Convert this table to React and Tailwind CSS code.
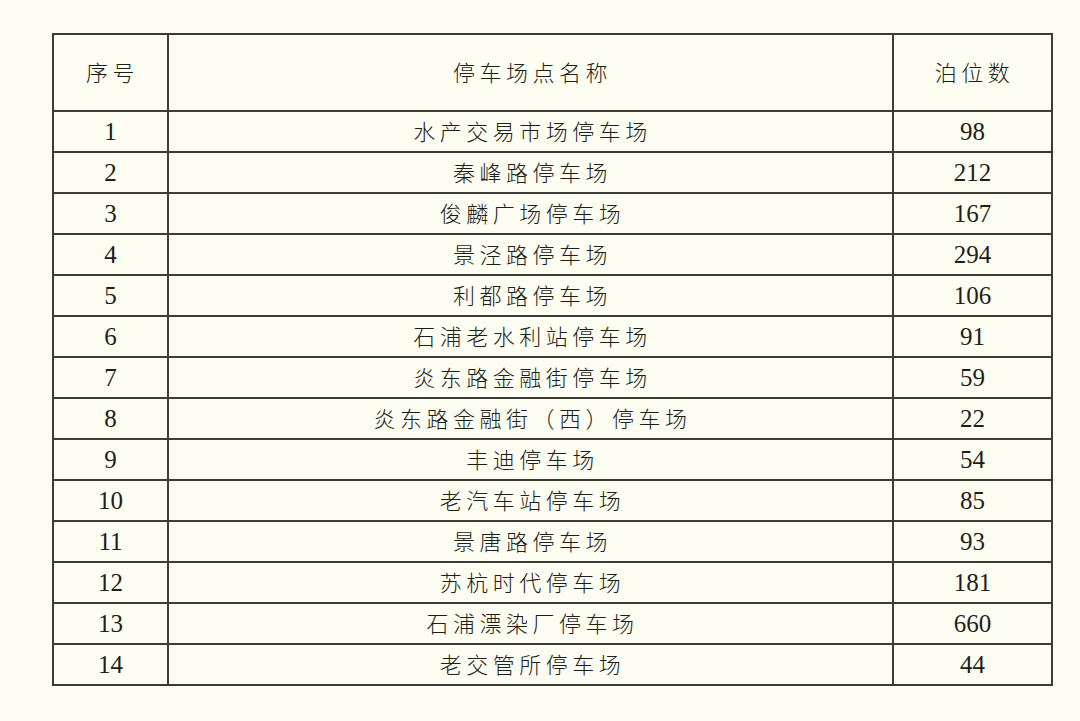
import React from "react";

const rows = [
  ["1", "水产交易市场停车场", "98"],
  ["2", "秦峰路停车场", "212"],
  ["3", "俊麟广场停车场", "167"],
  ["4", "景泾路停车场", "294"],
  ["5", "利都路停车场", "106"],
  ["6", "石浦老水利站停车场", "91"],
  ["7", "炎东路金融街停车场", "59"],
  ["8", "炎东路金融街（西）停车场", "22"],
  ["9", "丰迪停车场", "54"],
  ["10", "老汽车站停车场", "85"],
  ["11", "景唐路停车场", "93"],
  ["12", "苏杭时代停车场", "181"],
  ["13", "石浦漂染厂停车场", "660"],
  ["14", "老交管所停车场", "44"],
];

const cjk = "font-['Noto_Sans_CJK_SC',sans-serif] font-light text-[22px] tracking-[4.5px] pl-[4px] pb-[4px] leading-none";
const num = "font-['Liberation_Serif','Times_New_Roman',serif] text-[25px] leading-none";
const cell = "border-2 border-[#3c3c34] text-center";

export default function App() {
  return (
    <div className="w-[1080px] h-[721px] bg-[#fdfdf1] pt-[33px] pl-[52px] text-[#1e1e1a]">
      <table className="border-collapse w-[999px] table-fixed">
        <colgroup>
          <col className="w-[115px]" />
          <col className="w-[725px]" />
          <col className="w-[159px]" />
        </colgroup>
        <thead>
          <tr className="h-[77px]">
            <th className={`${cell} ${cjk}`}>序号</th>
            <th className={`${cell} ${cjk}`}>停车场点名称</th>
            <th className={`${cell} ${cjk}`}>泊位数</th>
          </tr>
        </thead>
        <tbody>
          {rows.map(([n, name, count]) => (
            <tr key={n} className="h-[41px]">
              <td className={`${cell} ${num}`}>{n}</td>
              <td className={`${cell} ${cjk}`}>{name}</td>
              <td className={`${cell} ${num}`}>{count}</td>
            </tr>
          ))}
        </tbody>
      </table>
    </div>
  );
}
